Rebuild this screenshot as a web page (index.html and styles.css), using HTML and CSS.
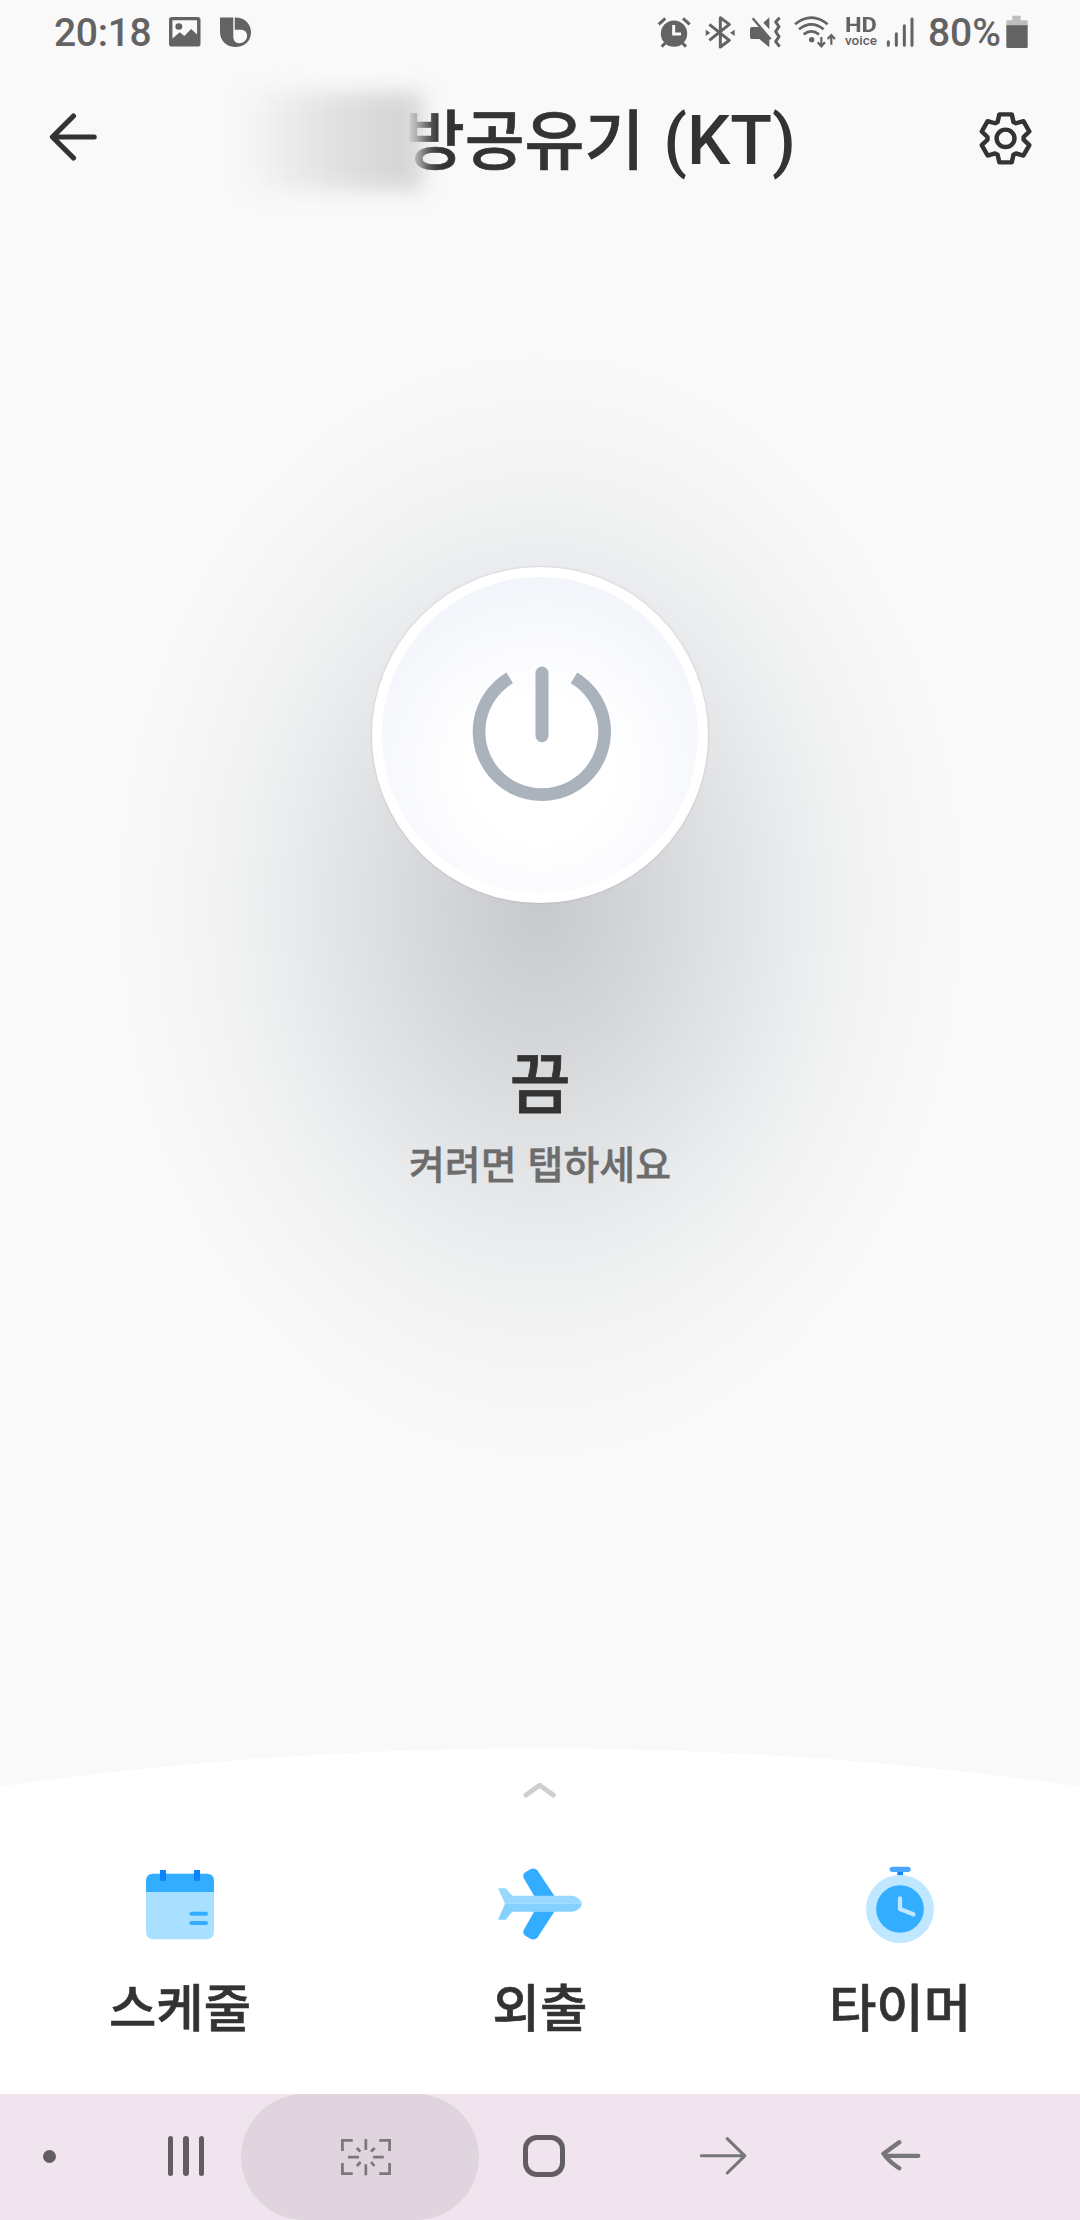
FILE: index.html
```html
<!DOCTYPE html>
<html lang="ko">
<head>
<meta charset="utf-8">
<title>방공유기 (KT)</title>
<link rel="stylesheet" href="styles.css">
</head>
<body>
<div class="screen">
  <div class="status">
    <span class="clock">20:18</span>
    <svg class="i-photo" viewBox="0 0 32 31" width="31.500" height="29.500" preserveAspectRatio="none"><path fill="#636363" fill-rule="evenodd" d="M3 0h26a3 3 0 0 1 3 3v25a3 3 0 0 1-3 3H3a3 3 0 0 1-3-3V3a3 3 0 0 1 3-3zM3.500 3.300V22.500L11 16l4.500 4L22.500 12.500l6 6V3.300z"/><circle cx="10" cy="10" r="3.500" fill="#636363"/></svg>
    <svg class="i-bixby" viewBox="0 0 32 32" width="31.500" height="30.500" preserveAspectRatio="none"><path fill="#636363" fill-rule="evenodd" d="M0 .500h13.500V20.500c0 4.500 2.500 7 6 7 4.500 0 8-3.200 8-7.700 0-4-2.600-6.300-6.500-6.300H15V.500C24.500.200 31.500 7 31.500 16S25 31.500 15.800 31.500 0 25 0 15.500z"/></svg>
    <div class="status-right">
      <svg viewBox="51 42 102 102" width="34" height="34"><g fill="none" stroke="#636363" stroke-width="9"><path d="M56 70l20-18M129 52l20 18M76 126l-11 11M127 126l11 11"/></g><circle cx="102" cy="98" r="39.500" fill="#636363"/><path d="M101 72v27h22" fill="none" stroke="#f9f9f9" stroke-width="9"/></svg>
      <svg class="i-bt" viewBox="196 42 90 104" width="30" height="34.660"><path fill="none" stroke="#636363" stroke-width="9" stroke-linejoin="round" d="M209 70l60 48-27 20V50l27 20-60 48"/><path fill="#636363" d="M198 86l14 9-14 10zM285 86l-14 9 14 10z"/></svg>
      <svg class="i-mute" viewBox="328 42 100 104" width="33.330" height="34.660"><path fill="#636363" d="M336 78h22l31 36v25l-30-25h-23q-5 0-5-5V83q0-5 5-5zM389 49v36l-18-20z"/><path d="M339 52l54 63" stroke="#636363" stroke-width="7"/><path fill="none" stroke="#636363" stroke-width="9" stroke-linejoin="round" d="M420 50l-12 13 10 14-10 15 10 15-10 15 12 15"/></svg>
      <svg class="i-wifi" viewBox="458 40 130 104" width="43.330" height="34.660"><g fill="none" stroke="#636363" stroke-width="8"><path d="M464 68q49-40 98 0M476 83q37-30 74 0M490 98q23-18 46 0"/><path stroke-width="6.500" d="M543 106v27M532 122l11 12 11-12M573 129v-28M562 112l11-12 11 12"/></g><circle cx="514" cy="114" r="8" fill="#636363"/></svg>
      <span class="hd"><b>HD</b><i>voice</i></span>
      <svg class="i-signal" viewBox="736 46 84 94" width="28" height="31.330"><path stroke="#636363" stroke-width="9" stroke-linecap="round" d="M743 123v11M767 99v35M791 75v59M814 55v79"/></svg>
      <span class="percent">80%</span>
      <svg class="i-batt" viewBox="1094 44 66 100" width="22" height="33.330"><path fill="#bdbdbd" d="M1113 46h25v14h18q3 0 3 3v14h-64V63q0-3 3-3h15z"/><path fill="#636363" d="M1095 75h64v64q0 4-4 4h-56q-4 0-4-4z"/></svg>
    </div>
  </div>

  <header class="header">
    <svg class="i-back" viewBox="143 334 142 150" width="49" height="50" preserveAspectRatio="none"><path fill="none" stroke="#333" stroke-width="15" stroke-linecap="round" stroke-linejoin="round" d="M214 346l-61 63 61 63M155 409h119"/></svg>
    <h1 class="title">방공유기<span class="latin">(KT)</span><span class="redacted"></span></h1>
    <svg class="i-gear" viewBox="-80 -82 160 164" width="55.100" height="54.700" preserveAspectRatio="none"><g fill="none" stroke="#333" stroke-width="13" stroke-linejoin="round"><circle r="26"/><path d="M-23 -49L-18 -72H18L23 -49L30.400 -45.300L52 -51.600L69 -20.400L52.500 -4V4L69 20.400L52 51.600L30.400 45.300L23 49L18 72H-18L-23 49L-30.400 45.300L-52 51.600L-69 20.400L-52.500 4V-4L-69 -20.400L-52 -51.600L-30.400 -45.300Z"/></g></svg>
  </header>

  <main class="stage">
    <button class="power" aria-label="전원">
      <svg viewBox="396 378 420 410" width="140" height="136.660"><g fill="none" stroke="#aab2bb"><path stroke-width="38" d="M509 416.500A188.500 188.500 0 1 0 702 416.500"/><path stroke-width="39" stroke-linecap="round" d="M606 402v188"/></g></svg>
    </button>
    <p class="state">끔</p>
    <p class="hint">켜려면 탭하세요</p>
  </main>

  <section class="sheet">
    <svg class="chevron" viewBox="250 124 100 52" width="33.330" height="17.330"><path fill="none" stroke="#cfcfcf" stroke-width="15" stroke-linecap="round" stroke-linejoin="round" d="M259 166l41-29 41 29"/></svg>
    <div class="actions">
      <div class="action">
        <svg viewBox="195 78 210 234" width="70" height="78"><rect x="198" y="104" width="204" height="197" rx="22" fill="#a9dfff"/><path fill="#32adff" d="M198 159v-33q0-22 22-22h160q22 0 22 22v33z"/><path fill="#0a84ff" d="M240 93h18v32h-18zM342 93h18v32h-18z"/><path stroke="#32adff" stroke-width="12" stroke-linecap="round" d="M334 224h44M334 252h44"/></svg>
        <span>스케줄</span>
      </div>
      <div class="action">
        <svg viewBox="171 376 258 234" width="86" height="78"><path fill="#32adff" d="M283 470l-32-55q-4-11 5-17l15-9q12-6 21 3l52 78zM283 515l-32 56q-4 11 5 17l15 9q12 6 21-3l52-79z"/><path fill="#99d9ff" d="M174 446h23l20 22h180q22 3 29 24H195z"/><path fill="#84d0ff" d="M174 540h23l20-24h180q24-4 29-24H195z"/></svg>
        <span>외출</span>
      </div>
      <div class="action">
        <svg viewBox="255 78 210 234" width="70" height="78"><path fill="#0a84ff" d="M352 96h17v14h-17z"/><rect x="329" y="83" width="63" height="16" rx="8" fill="#48a6ff"/><circle cx="360" cy="210" r="102" fill="#bfe7ff"/><circle cx="360" cy="210" r="71.500" fill="#32adff"/><path fill="none" stroke="#bfe7ff" stroke-width="13" stroke-linecap="round" stroke-linejoin="round" d="M360 178v32l40 16"/></svg>
        <span>타이머</span>
      </div>
    </div>
  </section>

  <nav class="nav">
    <div class="slot dot"><i></i></div>
    <div class="slot recents"><i></i><i></i><i></i></div>
    <div class="slot capture"><svg viewBox="986 172 150 114" width="51.660" height="38" preserveAspectRatio="none"><g fill="none" stroke="#7b777b" stroke-width="8"><path d="M993 211v-32h30M1100 179h30v32M993 247v32h30M1100 279h30v-32"/><path d="M1061 175v33M1061 251v33M1009 229.500h32M1082 229.500h31M1035 202l10 11M1087 202l-11 11M1035 256l11-12M1086 256l-10-12"/></g></svg></div>
    <div class="slot home"><i></i></div>
    <div class="slot next"><svg viewBox="462 170 142 120" width="48.900" height="40" preserveAspectRatio="none"><path fill="none" stroke="#777" stroke-width="9" stroke-linecap="round" stroke-linejoin="round" d="M544 178l51 51.500-51 51.500M469 229.500h124"/></svg></div>
    <div class="slot prev"><svg viewBox="988 178 122 100" width="42" height="33.300" preserveAspectRatio="none"><path fill="none" stroke="#777" stroke-width="13" stroke-linecap="round" stroke-linejoin="round" d="M1044 188l-46 34q16 24 46 44M1004 228.500h95"/></svg></div>
  </nav>
</div>
</body>
</html>
```
FILE: styles.css
```css
* { box-sizing: border-box; }
body { margin: 0; background: #f9f9f9; color: #333; font-family: Roboto, "Noto Sans CJK KR", sans-serif; }
svg { display: block; flex: none; }
h1, p { margin: 0; }
.screen { width: 1080px; height: 2220px; display: flex; flex-direction: column; overflow: hidden; background: #f9f9f9; }

.status { height: 64px; padding: 0 52px 0 54px; display: flex; align-items: center; color: #636363; }
.clock, .percent { font-size: 39px; font-weight: 500; line-height: 46px; margin-top: 2px; }
.clock { letter-spacing: -.3px; }
.i-photo { margin-left: 18px; }
.i-bixby { margin-left: 19px; }
.status-right { margin-left: auto; display: flex; align-items: center; }
.i-bt { margin-left: 14px; }
.i-mute { margin-left: 14px; }
.i-wifi { margin-left: 10px; }
.hd { width: 34px; margin-left: 8px; display: flex; flex-direction: column; align-items: center; }
.hd b { font: 700 20.500px/17px Roboto, sans-serif; transform: scaleX(1.15); }
.hd i { font: normal 500 13.500px/13px Roboto, sans-serif; }
.i-signal { margin-left: 8px; }
.percent { margin-left: 14px; }
.i-batt { margin-left: 5px; }

.header { height: 146px; padding: 0 47px 0 49px; display: flex; align-items: center; }
.i-back { margin-bottom: 1px; }
.i-gear { margin: 3px 0 0 auto; }
.title { position: relative; margin-left: 307px; margin-top: 2px; font: 500 65px/90px "Noto Sans CJK KR", sans-serif; white-space: nowrap; display: flex; align-items: baseline; -webkit-text-stroke: .7px #333; }
.latin { font: 500 68.500px/90px Roboto, sans-serif; margin-left: 19px; -webkit-text-stroke: 0; }
.redacted { position: absolute; left: -166px; top: 1px; width: 184px; height: 98px; background: linear-gradient(90deg, rgba(240,240,240,0), #e6e6e6 40%, #d7d7d7 80%); filter: blur(10px); }

.stage { flex: 1; display: flex; flex-direction: column; align-items: center; padding-top: 357px; background: radial-gradient(420px 550px at 540px 694px, #c8c9cd 0%, #d1d2d5 17%, #dadbdd 33%, #e3e4e6 48%, #eaebed 60%, #f1f2f2 74%, #f6f6f6 87%, #f9f9f9 100%); }
.power { width: 336px; height: 336px; padding: 0 0 0 4px; border: 10px solid #fff; border-radius: 50%; background: radial-gradient(circle 200px at 50% 61%, #fff 0, #fff 35%, #f9fafd 67%, #f1f4fa 100%); box-shadow: 0 0 2px rgba(120,125,150,.5); display: flex; align-items: center; justify-content: center; }
.power svg { margin-top: -3px; }
.state { font: 500 66px/90px "Noto Sans CJK KR", sans-serif; margin-top: 131px; -webkit-text-stroke: .8px #333; }
.hint { font: 500 39px/56px "Noto Sans CJK KR", sans-serif; color: #6c6c6c; margin-top: 10px; -webkit-text-stroke: .4px #6c6c6c; }

.sheet { height: 346px; padding-top: 33px; background: radial-gradient(circle 3856px at 540px 3856px, #fff 99.980%, #f9f9f9 100%); display: flex; flex-direction: column; align-items: center; }
.actions { width: 100%; display: grid; grid-template-columns: repeat(3, 1fr); margin-top: 67px; }
.action { display: flex; flex-direction: column; align-items: center; font: 500 51.500px/74px "Noto Sans CJK KR", sans-serif; -webkit-text-stroke: .6px #333; }
.action span { margin-top: 25px; }

.nav { height: 126px; background: #f0e5ee; display: flex; }
.slot { display: flex; align-items: center; justify-content: center; padding-bottom: 2px; }
.dot { width: 98px; }
.dot i { width: 13px; height: 13px; border-radius: 50%; background: #625d61; }
.recents { width: 110px; margin-left: 33px; gap: 10.700px; }
.recents i { width: 5.200px; height: 40px; border-radius: 3px; background: #625d61; }
.capture { width: 238px; padding: 0 0 1px 11px; border-radius: 63px; background: #e0d5de; }
.home { width: 130px; }
.home i { width: 42px; height: 42px; border: 5.200px solid #625d61; border-radius: 14px; }
.next { width: 229px; }
.prev { width: 126px; }
```
